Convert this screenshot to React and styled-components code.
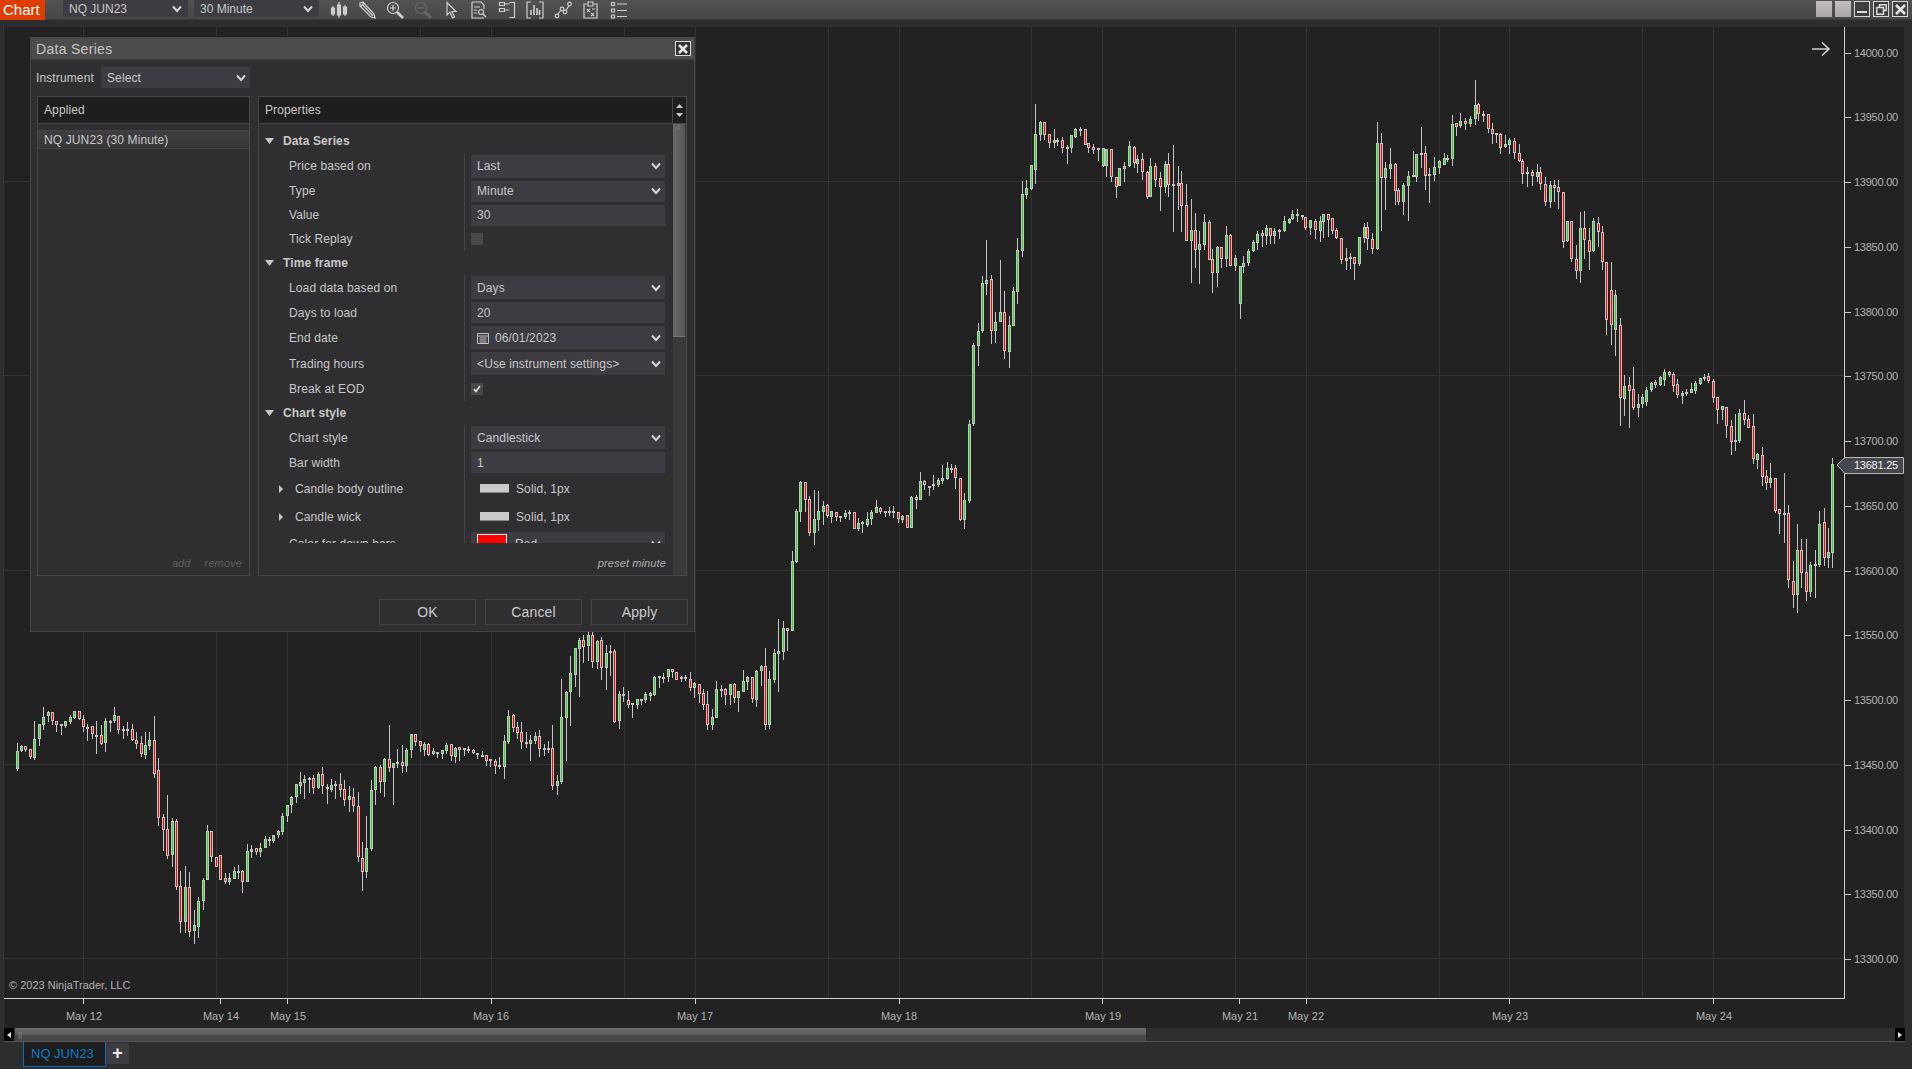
import { useMemo } from "react";
import styled, { createGlobalStyle } from "styled-components";

const GlobalStyle = createGlobalStyle`
  html, body {
    margin: 0;
    padding: 0;
    height: 100%;
    background: #2d2d2f;
    overflow: hidden;
  }
  * {
    box-sizing: border-box;
  }
`;

const Page = styled.div`
  position: relative;
  width: 1912px;
  height: 1069px;
  display: flex;
  flex-direction: column;
  background: #2d2d2f;
  color: #c8c8c8;
  font-family: "Liberation Sans", Arial, sans-serif;
  font-size: 12px;
`;

/* ---- top toolbar ---- */
const Toolbar = styled.div`
  height: 20px;
  flex: none;
  display: flex;
  align-items: flex-start;
  background: linear-gradient(#525252, #474747);
  border-bottom: 1px solid #3b3b3b;
`;
const ChartTab = styled.div`
  width: 45px;
  height: 20px;
  margin-right: 18px;
  background: #e03c00;
  color: #fff;
  font-size: 15px;
  line-height: 19px;
  padding-left: 3px;
`;
const ToolSelect = styled.div`
  width: 125px;
  height: 17px;
  margin-right: 6px;
  padding: 0 6px;
  display: flex;
  align-items: center;
  justify-content: space-between;
  background: #3c3c42;
  font-size: 12px;
`;
const ToolIcons = styled.div`
  display: flex;
  gap: 10px;
  margin-left: 5px;
  height: 19px;
  align-items: center;
`;
const ToolIcon = styled.svg`
  width: 18px;
  height: 18px;
  fill: none;
  stroke: ${(p) => (p.$dim ? "#6a6a6a" : "#cfcfcf")};
  stroke-width: 1.2;
`;
const WinButtons = styled.div`
  margin-left: auto;
  margin-right: 4px;
  margin-top: 1px;
  display: flex;
  gap: 3px;
`;
const WinFilled = styled.div`
  width: 16px;
  height: 16px;
  background: linear-gradient(#c4c0c0, #a9a5a5);
`;
const WinOutlined = styled.div`
  width: 16px;
  height: 16px;
  border: 1px solid #d8d8d8;
  background: #3f3f3f;
  display: flex;
  align-items: center;
  justify-content: center;
`;

/* ---- chart ---- */
const ChartFrame = styled.div`
  flex: 1;
  margin: 7px 8px 0 3px;
  border-left: 1px solid #3a3a3d;
  background: #222222;
  min-height: 0;
  position: relative;
`;
const ChartSvg = styled.svg`
  display: block;
  width: 1901px;
  height: 1001px;
`;
const AxisText = styled.text`
  font-family: "Liberation Sans", Arial, sans-serif;
  font-size: 11px;
  fill: ${(p) => p.$fill || "#b2b2b2"};
  text-anchor: ${(p) => p.$anchor || "start"};
  letter-spacing: ${(p) => (p.$tight ? "-0.25px" : "0")};
`;

/* ---- bottom scrollbar + tabs ---- */
const ScrollRow = styled.div`
  height: 14px;
  flex: none;
  margin: 0 7px 0 4px;
  display: flex;
  background: #2f2f2f;
  border-bottom: 1px solid #555;
`;
const ScrollBtn = styled.div`
  width: 10px;
  height: 13px;
  flex: none;
  background: #000;
  display: flex;
  align-items: center;
  justify-content: center;
`;
const ScrollThumb = styled.div`
  width: 1131px;
  flex: none;
  margin-left: 1px;
  padding: 2px 0 0 3px;
  color: #8d8d8d;
  font-size: 8px;
  background: linear-gradient(#6c6c6c, #5c5c5c 50%, #474747 52%, #474747);
`;
const ScrollTrack = styled.div`
  flex: 1;
`;
const TabRow = styled.div`
  height: 27px;
  flex: none;
  padding-left: 23px;
  display: flex;
  align-items: flex-start;
`;
const Tab = styled.div`
  width: 83px;
  height: 25px;
  border: 1px solid #0c6db8;
  border-top: none;
  background: #1d1d1d;
  color: #0f78c8;
  font-size: 13px;
  padding-left: 7px;
  line-height: 24px;
`;
const AddTab = styled.div`
  width: 23px;
  height: 21px;
  margin-top: 1px;
  background: #3c3c42;
  color: #ececec;
  font-size: 18px;
  font-weight: 700;
  line-height: 20px;
  text-align: center;
`;

/* ---- dialog ---- */
const Dialog = styled.div`
  position: absolute;
  left: 30px;
  top: 37px;
  width: 665px;
  height: 595px;
  display: flex;
  flex-direction: column;
  background: #2f2f31;
  border: 1px solid #444446;
  letter-spacing: 0.12px;
`;
const DialogTitle = styled.div`
  height: 22px;
  flex: none;
  display: flex;
  align-items: center;
  justify-content: space-between;
  padding: 0 3px 0 5px;
  background: #4c4c4c;
  border-bottom: 1px solid #3d3d3d;
  font-size: 14px;
  letter-spacing: 0.3px;
  color: #c4c4c4;
`;
const CloseBox = styled.div`
  width: 16px;
  height: 15px;
  border: 1px solid #dcdcdc;
  background: #333;
  display: flex;
  align-items: center;
  justify-content: center;
`;
const InstrumentRow = styled.div`
  margin: 7px 0 0 5px;
  height: 21px;
  flex: none;
  display: flex;
  align-items: center;
`;
const InstrumentLabel = styled.span`
  width: 65px;
`;
const Field = styled.div`
  width: ${(p) => p.$w || 194}px;
  height: ${(p) => p.$h || 23}px;
  display: flex;
  align-items: center;
  gap: ${(p) => p.$gap || 0}px;
  padding: 0 4px 0 6px;
  background: #3c3c42;
  color: #c8c8c8;
`;
const Chevron = styled.svg`
  width: 10px;
  height: 8px;
  margin-left: auto;
  flex: none;
  fill: none;
  stroke: #d6d6d6;
  stroke-width: 2;
`;
const Panels = styled.div`
  margin: 8px 0 0 6px;
  height: 480px;
  flex: none;
  display: flex;
  gap: 8px;
`;
const AppliedPanel = styled.div`
  width: 213px;
  display: flex;
  flex-direction: column;
  border: 1px solid #47474a;
`;
const PanelHeader = styled.div`
  height: 27px;
  flex: none;
  display: flex;
  align-items: center;
  justify-content: space-between;
  padding-left: 6px;
  background: #1e1e1e;
  border-bottom: 1px solid #47474a;
`;
const AppliedItem = styled.div`
  height: 19px;
  margin-top: 6px;
  padding-left: 6px;
  line-height: 18px;
  background: linear-gradient(#3f3f42, #353538);
  border-top: 1px solid #444;
  border-bottom: 1px solid #444;
`;
const PanelFooter = styled.div`
  margin-top: auto;
  height: 27px;
  display: flex;
  justify-content: flex-end;
  gap: 14px;
  padding-right: 7px;
  font-size: 11px;
  font-style: italic;
  line-height: 30px;
  color: ${(p) => p.$color || "#5f5f5f"};
`;
const PropsPanel = styled.div`
  width: 429px;
  display: flex;
  flex-direction: column;
  border: 1px solid #47474a;
`;
const ScrollStep = styled.div`
  width: 14px;
  height: 100%;
  display: flex;
  flex-direction: column;
  align-items: center;
  justify-content: space-around;
  padding: 4px 0;
  border-left: 1px solid #47474a;
`;
const PropsBody = styled.div`
  flex: 1;
  display: flex;
  min-height: 0;
`;
const PropsMain = styled.div`
  flex: 1;
  display: flex;
  flex-direction: column;
  min-width: 0;
`;
const PropsClip = styled.div`
  height: 419px;
  flex: none;
  padding-top: 5px;
  overflow: hidden;
`;
const VScroll = styled.div`
  width: 13px;
  flex: none;
  background: #3a3a3c;
`;
const VThumb = styled.div`
  width: 12px;
  height: 213px;
  background: linear-gradient(90deg, #6a6a6a, #555);
  border-bottom: 1px solid #777;
  padding: 2px 1px;
  color: #888;
  font-size: 6px;
  line-height: 2px;
  text-align: center;
`;
const SectionRow = styled.div`
  height: 24px;
  display: flex;
  align-items: center;
  padding-left: 6px;
  font-weight: 700;
`;
const Triangle = styled.svg`
  width: 9px;
  height: 6px;
  margin-right: 9px;
  fill: #c8c8c8;
`;
const PropRow = styled.div`
  height: ${(p) => p.$h}px;
  display: flex;
`;
const PropLabel = styled.div`
  width: 205px;
  flex: none;
  display: flex;
  align-items: center;
  padding-left: ${(p) => (p.$nested ? 20 : 30)}px;
`;
const Expander = styled.svg`
  width: 4px;
  height: 8px;
  margin-right: 12px;
  fill: #c8c8c8;
`;
const PropValue = styled.div`
  flex: 1;
  display: flex;
  align-items: center;
  padding-left: 6px;
  border-left: 1px solid #444447;
`;
const CheckBox = styled.div`
  width: 12px;
  height: 12px;
  background: #47474c;
  display: flex;
  align-items: center;
  justify-content: center;
`;
const StrokeSwatch = styled.div`
  width: 29px;
  height: 9px;
  margin: 0 7px 0 9px;
  background: #cacaca;
  border-bottom: 1px solid #888;
`;
const ColorSwatch = styled.div`
  width: 30px;
  height: 20px;
  margin-right: 8px;
  flex: none;
  background: #ff0000;
  border: 1px solid #e8e8e8;
`;
const DialogButtons = styled.div`
  margin: 23px 6px 0 0;
  display: flex;
  justify-content: flex-end;
  gap: 9px;
`;
const DialogButton = styled.div`
  width: 97px;
  height: 26px;
  border: 1px solid #444447;
  text-align: center;
  font-size: 14px;
  line-height: 24px;
  color: #cdcdcd;
`;
const ArrowMark = styled.svg`
  position: absolute;
  left: 1811px;
  top: 41px;
  width: 20px;
  height: 16px;
  fill: none;
  stroke: #d0d0d0;
  stroke-width: 1.6;
`;

// candle readings: [x, top, bottom, high, low, up], scaled into page pixels by each block's offsets
const candleBlocks = [
  { x0: 0, y0: 680, sx: 3, sy: 3, rows: [
    [52,213,266,190,272,1],[64,198,212,195,215,1],[76,199,209,198,215,0],[90,208,230,208,236,0],[103,178,233,123,240,1],[118,133,176,133,197,1],[130,111,134,82,150,1],[145,97,109,93,126,1],[157,97,124,97,135,0],[169,124,134,124,156,0],[184,133,137,133,165,1],[196,124,137,124,143,1],[211,111,127,105,132,1],[223,94,114,94,118,1],[238,94,118,94,120,0],[250,118,140,105,156,0],[262,141,143,133,182,1],[277,139,163,139,177,0],[289,165,170,123,222,1],[304,166,192,135,195,0],[316,124,188,114,216,1],[331,123,125,120,156,1],[343,106,122,82,128,1],[355,109,151,109,162,0],[370,148,152,138,177,1],[382,148,150,126,168,1],[397,148,181,132,183,0],[409,181,191,156,207,0],[424,190,223,168,231,0],[436,196,224,156,237,1],[448,181,197,156,209,1],[463,181,281,108,294,0],[475,271,413,234,438,0],[490,411,449,402,513,0],[502,447,527,345,537,0],[517,423,524,414,561,1],[529,423,620,417,630,0],[541,619,725,573,758,0],[556,622,725,558,758,1],[568,622,755,576,771,0],[583,736,752,690,792,1],[595,664,740,652,774,1],[610,601,662,594,690,1],[622,454,601,435,601,1],[634,454,532,454,546,0],[649,532,560,532,560,0],[661,526,599,526,599,0],[676,594,605,579,612,0],[688,595,605,579,615,1],[703,574,596,562,598,1],[715,573,575,556,598,1],[727,574,605,570,638,0],[742,514,607,492,607,1],[754,507,517,495,534,1],[769,505,515,505,525,0],[781,505,515,490,530,1],[796,478,503,468,505,1],[808,477,482,472,498,1],[820,466,482,464,488,1],[835,454,464,450,473,1],[847,409,455,399,465,1],[862,376,409,376,426,1],[874,351,376,348,399,1],[889,313,350,313,368,1],[901,307,317,277,342,1],[913,298,308,285,357,1],[928,294,298,291,339,1],[940,295,323,285,342,0],[955,283,323,277,326,1],[967,283,319,262,342,0],[982,321,326,312,372,1],[994,314,329,297,335,1],[1006,312,316,304,357,1],[1021,313,329,280,350,0],[1033,328,361,300,378,0],[1048,349,359,318,396,1],[1060,352,379,323,396,0],[1075,379,532,336,545,0],[1087,534,575,486,632,0],[1099,505,575,408,593,1],[1114,331,507,300,513,1],[1126,262,331,258,375,1],[1141,262,307,255,339,0],[1153,238,307,235,351,1],[1168,238,265,135,276,0],[1180,250,265,250,375,1],[1192,246,250,207,264,1],
  ] },
  { x0: 395, y0: 632, sx: 3, sy: 3, rows: [
    [22,391,401,339,423,0],[34,355,401,349,420,1],[49,307,355,307,378,1],[61,307,329,307,342,0],[76,328,341,328,360,0],[88,337,353,331,372,1],[100,337,368,333,372,0],[115,358,366,348,369,1],[127,359,365,359,378,0],[142,355,366,355,381,1],[154,340,358,333,365,1],[169,335,372,335,387,0],[181,347,374,345,392,1],[193,346,353,346,387,0],[208,349,353,349,372,1],[220,350,356,342,362,1],[235,355,362,351,366,0],[247,362,368,362,381,0],[262,370,372,357,372,1],[274,370,386,370,402,0],[286,382,386,382,405,1],[301,388,401,382,426,0],[313,400,404,375,410,1],[328,328,404,310,440,1],[340,253,330,235,336,1],[355,250,287,246,300,0],[367,286,302,270,321,0],[379,301,331,270,351,0],[394,331,335,300,348,1],[406,325,335,310,387,1],[421,313,326,300,335,1],[433,313,352,295,375,0],[448,349,353,337,372,1],[460,348,350,327,362,1],[472,349,461,280,474,0],[487,448,461,430,489,1],[499,256,449,141,456,1],[514,181,257,177,387,1],[526,124,181,72,282,1],[541,49,128,49,165,1],[553,25,50,18,195,1],[565,25,44,10,93,0],[580,10,41,0,87,1],[592,10,89,0,108,0],[607,28,89,25,111,1],[619,25,109,15,144,0],[634,62,109,40,174,1],[646,57,62,40,132,1],[658,58,269,52,272,0],[673,187,268,178,291,1],[685,186,188,165,210,1],[700,205,218,177,228,0],[712,214,220,214,258,1],[727,202,218,202,231,1],[739,201,203,201,219,1],[751,187,203,180,212,1],[766,183,191,180,207,1],[778,136,188,132,191,1],[793,133,139,133,168,0],[805,135,139,122,153,1],[820,112,134,112,150,1],[832,112,121,112,138,0],[844,121,143,121,143,0],[859,135,139,132,150,1],[871,135,139,129,147,1],[886,142,169,121,177,0],[898,154,169,150,199,1],
  ] },
  { x0: 695, y0: 460, sx: 3, sy: 3, rows: [
    [13,673,701,673,730,0],[25,700,734,687,750,0],[37,733,794,693,810,0],[52,772,794,747,810,1],[64,688,773,663,773,1],[79,687,689,675,711,1],[91,688,704,684,735,0],[106,673,704,673,735,1],[118,673,713,670,728,0],[130,694,713,694,755,1],[145,664,695,630,695,1],[157,652,665,648,690,1],[172,652,716,652,728,0],[184,633,719,630,740,1],[199,619,632,615,678,1],[211,619,796,564,810,0],[223,658,796,633,806,1],[238,580,660,568,668,1],[250,574,581,477,695,1],[265,505,575,484,600,1],[277,505,512,505,573,0],[292,304,513,274,514,1],[304,153,305,147,308,1],[316,67,157,64,185,1],[331,67,121,67,156,0],[343,118,218,109,227,0],[358,178,218,91,255,1],[370,154,181,94,213,1],[385,139,155,124,194,1],[397,136,169,133,173,0],[409,154,172,154,188,1],[424,157,172,157,182,0],[436,169,172,169,186,1],[451,160,172,151,178,1],[463,157,161,151,180,1],[478,157,208,157,208,0],[490,190,208,175,213,1],[502,187,190,184,219,1],[517,178,194,157,200,1],[529,157,176,151,194,1],[544,142,158,121,158,1],[556,145,157,142,161,0],[571,153,155,153,171,1],[583,153,155,142,168,1],[595,153,157,139,174,1],[610,157,178,157,189,0],[622,169,179,166,189,1],[637,166,205,166,205,0],[649,112,203,109,203,1],[664,112,121,106,147,0],[676,64,121,37,121,1],[688,64,76,60,90,0],[703,78,80,78,108,1],[715,73,79,45,90,1],[730,61,74,55,81,1],[742,55,62,15,72,1],[757,25,56,7,60,1],[769,24,27,12,38,1],[781,25,55,15,87,0],[796,55,180,55,183,0],[808,121,179,99,207,1],[823,-108,122,-120,130,1],
  ] },
  { x0: 940, y0: 90, sx: 3, sy: 3, rows: [
    [100,766,1002,760,1008,1],[115,724,767,700,828,1],[127,580,724,558,730,1],[139,571,581,450,615,1],[154,568,722,555,762,0],[166,697,722,666,760,1],[181,667,697,510,697,1],[193,667,782,603,807,0],[208,706,785,678,833,1],[220,603,707,591,707,1],[232,481,605,445,642,1],[247,313,482,274,501,1],[259,295,314,270,327,1],[274,226,297,226,300,1],[286,133,241,42,282,1],
  ] },
  { x0: 1000, y0: 60, sx: 2.613, sy: 3, rows: [
    [105,186,224,183,242,1],[116,186,224,186,240,0],[127,223,250,223,264,0],[140,241,250,207,264,1],[150,240,245,235,258,1],[163,241,265,232,278,0],[174,262,266,255,312,1],[186,226,263,226,278,1],[197,208,230,205,234,1],[208,207,209,201,227,1],[221,208,254,208,254,0],[231,250,263,250,279,0],[244,262,269,252,282,0],[255,264,266,264,303,1],[268,265,317,265,320,1],[278,268,317,268,352,1],[289,268,352,268,366,0],[302,352,380,352,413,0],[312,325,377,325,377,1],[325,319,326,307,366,1],[336,259,317,243,322,1],[349,262,308,259,323,0],[359,298,311,285,338,1],[370,298,337,280,360,0],[383,337,410,332,418,0],[393,319,410,295,410,1],[406,319,359,310,380,0],[417,355,380,335,453,0],[430,313,380,303,398,1],[440,313,374,280,410,0],[451,373,377,255,516,1],[464,370,377,318,450,1],[474,370,437,333,516,0],[487,436,542,372,542,0],[498,511,542,417,668,1],[510,511,569,460,625,0],[521,553,569,512,671,1],[532,487,554,462,570,1],[545,487,599,480,600,0],[555,598,640,568,698,0],[568,562,638,558,680,1],[578,562,598,562,625,0],[591,526,598,498,620,1],[602,526,617,522,617,0],[613,595,617,585,632,1],[626,619,731,619,776,1],[636,610,620,588,638,1],[649,574,608,567,618,1],[660,547,574,540,575,1],[672,523,548,513,570,1],[684,519,529,510,562,0],[694,505,529,495,556,1],[706,505,527,505,552,0],[717,514,527,503,552,1],[730,510,514,506,537,1],[741,484,512,468,515,1],[754,477,489,473,491,1],[764,463,478,450,480,1],[777,462,464,447,485,1],[788,466,472,466,480,0],[798,472,503,470,510,0],[811,481,503,481,525,1],[822,484,509,478,537,0],[835,484,512,468,545,1],[845,463,487,463,533,1],[858,463,479,463,530,0],[868,475,512,475,522,0],[879,511,535,504,538,0],[892,535,601,535,612,0],[903,595,602,564,631,1],[915,591,595,579,627,1],[926,592,613,592,659,0],[939,530,611,530,617,1],[950,502,533,490,548,1],[960,502,536,487,570,0],[973,536,566,519,581,0],[984,250,566,186,570,1],[996,250,353,219,513,0],[1007,325,353,307,449,1],[1020,313,326,265,357,1],[1031,313,392,310,436,0],[1041,391,425,385,434,0],[1054,376,425,370,464,1],[1065,347,377,332,482,1],[1078,344,351,274,351,1],[1088,283,350,283,365,1],[1101,279,282,202,323,1],[1111,280,347,258,390,0],[1122,343,347,325,428,1],[1135,322,344,292,364,1],[1146,304,323,300,342,1],[1159,295,315,280,316,1],[1169,294,296,286,306,1],[1182,193,296,166,318,1],[1192,190,200,190,228,0],[1203,184,199,159,205,1],[1216,184,191,175,209,0],[1227,178,192,167,202,1],[1240,136,177,60,194,1],[1250,132,163,128,182,0],[1263,161,164,153,186,1],[1274,163,206,163,219,0],[1285,206,223,190,252,0],[1297,220,223,220,248,1],[1307,223,263,220,281,0],[1320,252,260,225,265,1],[1331,240,254,235,281,1],[1344,244,278,235,297,0],[1355,278,302,253,307,0],[1365,304,341,297,371,0],[1378,336,341,321,380,1],[1389,337,347,329,378,0],[1402,337,350,313,365,1],[1412,337,371,321,389,0],[1425,371,425,351,438,0],[1436,376,425,364,443,1],[1447,376,383,361,425,0],[1459,382,397,361,446,0],[1470,397,545,397,563,0],[1482,484,542,484,545,1],[1493,484,596,484,607,0],[1506,596,632,556,656,0],[1516,505,632,456,668,1],[1527,505,539,453,596,0],[1540,541,575,503,630,0],[1550,484,572,475,577,1],[1563,488,517,470,560,0],
  ] },
  { x0: 0, y0: 0, sx: 1, sy: 1, rows: [
    [1602,232,262,226,270,0],[1606,262,320,262,335,0],[1611,290,325,262,345,0],[1615,295,330,290,356,1],
  ] },
  { x0: 1590, y0: 350, sx: 3, sy: 3, rows: [
    [91,-75,145,-96,228,0],[103,109,146,76,198,1],[118,106,122,82,234,0],[130,118,173,52,180,0],[145,163,174,133,201,1],[157,142,161,133,174,1],[169,121,157,112,168,1],[184,100,120,97,126,1],[196,97,104,91,114,0],[211,82,104,79,108,1],[223,67,90,57,108,1],[238,67,75,64,82,0],[250,73,108,67,126,0],[262,103,136,88,144,0],[277,129,137,124,162,1],[289,126,132,118,138,1],[304,118,128,100,128,1],[316,100,122,94,132,1],[331,85,102,85,105,1],[343,82,87,72,93,1],[355,79,94,70,99,0],[370,94,144,88,159,0],[382,142,179,142,222,0],[397,169,179,169,210,1],[409,172,227,172,264,0],[424,229,275,210,315,0],[436,270,275,192,303,1],[448,190,274,178,279,1],[463,190,209,151,225,0],[475,208,233,196,234,0],[490,229,326,193,342,0],[502,313,329,310,357,1],[517,316,380,291,408,0],[529,379,398,360,420,0],[541,385,398,340,415,1],[556,385,484,385,490,0],[568,478,491,478,552,0],[583,489,491,370,579,1],[595,490,691,465,715,0],[610,694,734,633,774,0],[622,601,734,522,789,1],[634,601,670,568,714,0],[649,667,725,568,753,0],[661,646,725,637,741,1],[676,643,647,600,744,1],[688,523,644,484,651,1],[703,517,623,475,648,0],[715,607,623,535,654,1],[727,343,608,325,654,1],
  ] },
];

function makeCandles() {
  const out = [];
  candleBlocks.forEach(({ x0, y0, sx, sy, rows }) => {
    rows.forEach(([x, top, bot, hi, lo, up]) => {
      out.push({
        x: Math.round(x0 + x / sx),
        top: Math.round(y0 + top / sy),
        bot: Math.round(y0 + bot / sy),
        high: Math.round(y0 + hi / sy),
        low: Math.round(y0 + lo / sy),
        up: !!up,
      });
    });
  });
  return out;
}

const gridXs = [83,216,287,420,491,624,695,828,899,1031,1102,1235,1306,1439,1509,1642,1713];
const gridYs = [181,375,570,764,958];
const prices = [14000,13950,13900,13850,13800,13750,13700,13650,13600,13550,13500,13450,13400,13350,13300];
const dates = [["May 12",83,84],["May 14",220,221],["May 15",287,288],["May 16",491,491],["May 17",695,695],["May 18",899,899],["May 19",1102,1103],["May 21",1239,1240],["May 22",1306,1306],["May 23",1509,1510],["May 24",1713,1714]];
const priceY = (p) => 52.5 + ((14000 - p) * 64.75) / 50;

function Chart() {
  const candles = useMemo(makeCandles, []);
  return (
    <ChartSvg viewBox="4 27 1901 1001" shapeRendering="crispEdges">
      {gridXs.map((x) => (
        <rect key={x} x={x} y={27} width={1} height={970} fill="#333335" />
      ))}
      {gridYs.map((y) => (
        <rect key={y} x={4} y={y} width={1840} height={1} fill="#333335" />
      ))}
      {candles.map((c, i) => (
        <g key={i}>
          <rect x={c.x} y={c.high} width={1} height={c.low - c.high} fill="#c4c4c4" />
          <rect x={c.x - 1} y={c.top} width={3} height={Math.max(2, c.bot - c.top)} fill="#c4c4c4" />
          <rect x={c.x} y={c.top + 1} width={1} height={Math.max(0, c.bot - c.top - 2)} fill={c.up ? "#28e028" : "#ff0000"} />
        </g>
      ))}
      <rect x={1844} y={27} width={1} height={972} fill="#d0d0d0" />
      <rect x={4} y={998} width={1841} height={1} fill="#d0d0d0" />
      {prices.map((p) => (
        <g key={p}>
          <rect x={1845} y={Math.round(priceY(p))} width={6} height={1} fill="#c8c8c8" />
          <AxisText $tight x={1854} y={priceY(p) + 4}>{p.toFixed(2)}</AxisText>
        </g>
      ))}
      {dates.map(([label, tick, mid]) => (
        <g key={label}>
          <rect x={tick} y={999} width={1} height={5} fill="#d0d0d0" />
          <AxisText x={mid} y={1020} $anchor="middle">{label}</AxisText>
        </g>
      ))}
      <polygon points="1837,465 1845,457.5 1903.5,457.5 1903.5,473.5 1845,473.5" fill="#46464e" stroke="#b8b8b8" shapeRendering="auto" />
      <AxisText $tight x={1854} y={469} $fill="#f2f2f2">13681.25</AxisText>
      <AxisText x={9} y={989}>© 2023 NinjaTrader, LLC</AxisText>
    </ChartSvg>
  );
}

const Down = () => (
  <Chevron viewBox="0 0 10 8"><path d="M1 1.5 L5 6 L9 1.5" /></Chevron>
);

const toolIcons = [
  <><path d="M3 5v10M9 1v16M15 4v11" /><path d="M1.5 7h3v6h-3zM7.5 4h3v10h-3zM13.5 6h3v7h-3z" fill="#cfcfcf" /></>,
  <><path d="M2 2l3-1 11 12 1 4-4-1L2 5z" /><path d="M4 3l11 12M3 5l3-3" /></>,
  <><circle cx="7" cy="7" r="5.5" /><path d="M7 4v6M4 7h6" /><path d="M11 11l6 6" strokeWidth="2.6" /></>,
  <><circle cx="7" cy="7" r="5.5" /><path d="M4 7h6" /><path d="M11 11l6 6" strokeWidth="2.6" /></>,
  <path d="M5 1.5v12.5l3-3 2.5 6 2-1-2.5-5.5h4z" />,
  <><path d="M2 1h9l3 3v4M2 1v16h12" /><path d="M4 6h6M4 9h3M4 12h3" /><circle cx="11" cy="11" r="2.5" /><path d="M13 13l3 3" strokeWidth="1.6" /></>,
  <><path d="M1.5 1.5h5v3h-5zM1.5 7.5h5v3h-5zM11.5 1.5h5v15h-5" /><path d="M6.5 3h5M6.5 9h5" /></>,
  <><path d="M5 1H1v16h4M13 1h4v16h-4" /><path d="M5 14V9M8 14V4M11 14V7M13.5 14V9" strokeWidth="1.6" /></>,
  <><circle cx="3" cy="15" r="1.8" /><circle cx="8" cy="8" r="1.8" /><circle cx="11" cy="11" r="1.8" /><circle cx="15.5" cy="3" r="1.8" /><path d="M4 13l3-4M9 9l1 1M12 9.5l3-5" /></>,
  <><path d="M5 3H2v14h13V3h-3" /><path d="M6 1h5v4H6z" /><path d="M5 8l3 3M8 8l-3 3M9 12l3 3M12 12l-3 3M10 8h3" /></>,
  <><path d="M1.5 1.5h3v3h-3zM1.5 8h3v3h-3zM1.5 14h3v3h-3z" /><path d="M7 3h10M7 9.5h10M7 15.5h10" /></>,
];

const rows = [
  { section: "Data Series" },
  { label: "Price based on", h: 26, value: "Last", select: true },
  { label: "Type", h: 24, value: "Minute", select: true, fh: 21 },
  { label: "Value", h: 24, value: "30", fh: 21 },
  { label: "Tick Replay", h: 24, check: "off" },
  { section: "Time frame" },
  { label: "Load data based on", h: 25, value: "Days", select: true },
  { label: "Days to load", h: 25, value: "20", fh: 21 },
  { label: "End date", h: 25, value: "06/01/2023", select: true, date: true },
  { label: "Trading hours", h: 27, value: "<Use instrument settings>", select: true },
  { label: "Break at EOD", h: 24, check: "on" },
  { section: "Chart style" },
  { label: "Chart style", h: 25, value: "Candlestick", select: true },
  { label: "Bar width", h: 25, value: "1", fh: 21 },
  { label: "Candle body outline", h: 27, stroke: "Solid, 1px" },
  { label: "Candle wick", h: 29, stroke: "Solid, 1px" },
  { label: "Color for down bars", h: 25, value: "Red", select: true, color: true },
];

function PropertyRow({ row }) {
  if (row.section) {
    return (
      <SectionRow>
        <Triangle viewBox="0 0 9 6"><path d="M0 0h9L4.5 6z" /></Triangle>
        {row.section}
      </SectionRow>
    );
  }
  return (
    <PropRow $h={row.h}>
      <PropLabel $nested={!!row.stroke}>
        {row.stroke && <Expander viewBox="0 0 4 8"><path d="M0 0l4 4-4 4z" /></Expander>}
        {row.label}
      </PropLabel>
      <PropValue>
        {row.check && (
          <CheckBox>
            {row.check === "on" && (
              <svg width="8" height="8" viewBox="0 0 8 8" fill="none" stroke="#e0e0e0" strokeWidth="1.6"><path d="M1 4l2 2.5L7 1" /></svg>
            )}
          </CheckBox>
        )}
        {row.stroke && (
          <>
            <StrokeSwatch />
            {row.stroke}
          </>
        )}
        {row.value && (
          <Field $h={row.fh} $gap={row.date ? 6 : 0}>
            {row.date && (
              <svg width="12" height="12" viewBox="0 0 12 12" fill="none" stroke="#c0c0c0"><path d="M.5 1.5h11v10H.5zM.5 4h11M2.5 6h7M2.5 8h7M2.5 10h7" /></svg>
            )}
            {row.color && <ColorSwatch />}
            {row.value}
            {row.select && <Down />}
          </Field>
        )}
      </PropValue>
    </PropRow>
  );
}

export default function App() {
  return (
    <Page>
      <GlobalStyle />
      <Toolbar>
        <ChartTab>Chart</ChartTab>
        <ToolSelect>NQ JUN23<Down /></ToolSelect>
        <ToolSelect>30 Minute<Down /></ToolSelect>
        <ToolIcons>
          {toolIcons.map((icon, i) => (
            <ToolIcon key={i} viewBox="0 0 18 18" $dim={i === 3}>{icon}</ToolIcon>
          ))}
        </ToolIcons>
        <WinButtons>
          <WinFilled />
          <WinFilled />
          <WinOutlined>
            <svg width="10" height="10" viewBox="0 0 10 10"><rect x="0" y="7" width="10" height="2" fill="#ddd" /></svg>
          </WinOutlined>
          <WinOutlined>
            <svg width="11" height="11" viewBox="0 0 11 11" fill="none" stroke="#e0e0e0" strokeWidth="1.4"><path d="M3.5 3V.8h6.7v5.7H8M.8 3.5h6.7v6.7H.8z" /></svg>
          </WinOutlined>
          <WinOutlined>
            <svg width="11" height="11" viewBox="0 0 11 11" fill="none" stroke="#e4e4e4" strokeWidth="2.6"><path d="M1 1l9 9M10 1l-9 9" /></svg>
          </WinOutlined>
        </WinButtons>
      </Toolbar>

      <ChartFrame>
        <Chart />
      </ChartFrame>

      <ScrollRow>
        <ScrollBtn>
          <svg width="4" height="6" viewBox="0 0 4 6" fill="#e0e0e0"><path d="M4 0v6L0 3z" /></svg>
        </ScrollBtn>
        <ScrollThumb>||</ScrollThumb>
        <ScrollTrack />
        <ScrollBtn>
          <svg width="4" height="6" viewBox="0 0 4 6" fill="#e0e0e0"><path d="M0 0v6l4-3z" /></svg>
        </ScrollBtn>
      </ScrollRow>
      <TabRow>
        <Tab>NQ JUN23</Tab>
        <AddTab>+</AddTab>
      </TabRow>

      <ArrowMark viewBox="0 0 20 16">
        <path d="M1 8h17M11 1.5L18 8l-7 6.5" />
      </ArrowMark>

      <Dialog>
        <DialogTitle>
          Data Series
          <CloseBox>
            <svg width="10" height="10" viewBox="0 0 10 10" fill="none" stroke="#e4e4e4" strokeWidth="2.6"><path d="M1 1l8 8M9 1l-8 8" /></svg>
          </CloseBox>
        </DialogTitle>
        <InstrumentRow>
          <InstrumentLabel>Instrument</InstrumentLabel>
          <Field $w={149} $h={21}>Select<Down /></Field>
        </InstrumentRow>
        <Panels>
          <AppliedPanel>
            <PanelHeader>Applied</PanelHeader>
            <AppliedItem>NQ JUN23 (30 Minute)</AppliedItem>
            <PanelFooter>
              <span>add</span>
              <span>remove</span>
            </PanelFooter>
          </AppliedPanel>
          <PropsPanel>
            <PanelHeader>
              Properties
              <ScrollStep>
                <svg width="7" height="4" viewBox="0 0 7 4" fill="#ccc"><path d="M0 4h7L3.5 0z" /></svg>
                <svg width="7" height="4" viewBox="0 0 7 4" fill="#ccc"><path d="M0 0h7L3.5 4z" /></svg>
              </ScrollStep>
            </PanelHeader>
            <PropsBody>
              <PropsMain>
                <PropsClip>
                  {rows.map((row, i) => (
                    <PropertyRow key={i} row={row} />
                  ))}
                </PropsClip>
                <PanelFooter $color="#b0b0b0">
                  <span>preset minute</span>
                </PanelFooter>
              </PropsMain>
              <VScroll>
                <VThumb>≡</VThumb>
              </VScroll>
            </PropsBody>
          </PropsPanel>
        </Panels>
        <DialogButtons>
          <DialogButton>OK</DialogButton>
          <DialogButton>Cancel</DialogButton>
          <DialogButton>Apply</DialogButton>
        </DialogButtons>
      </Dialog>
    </Page>
  );
}
